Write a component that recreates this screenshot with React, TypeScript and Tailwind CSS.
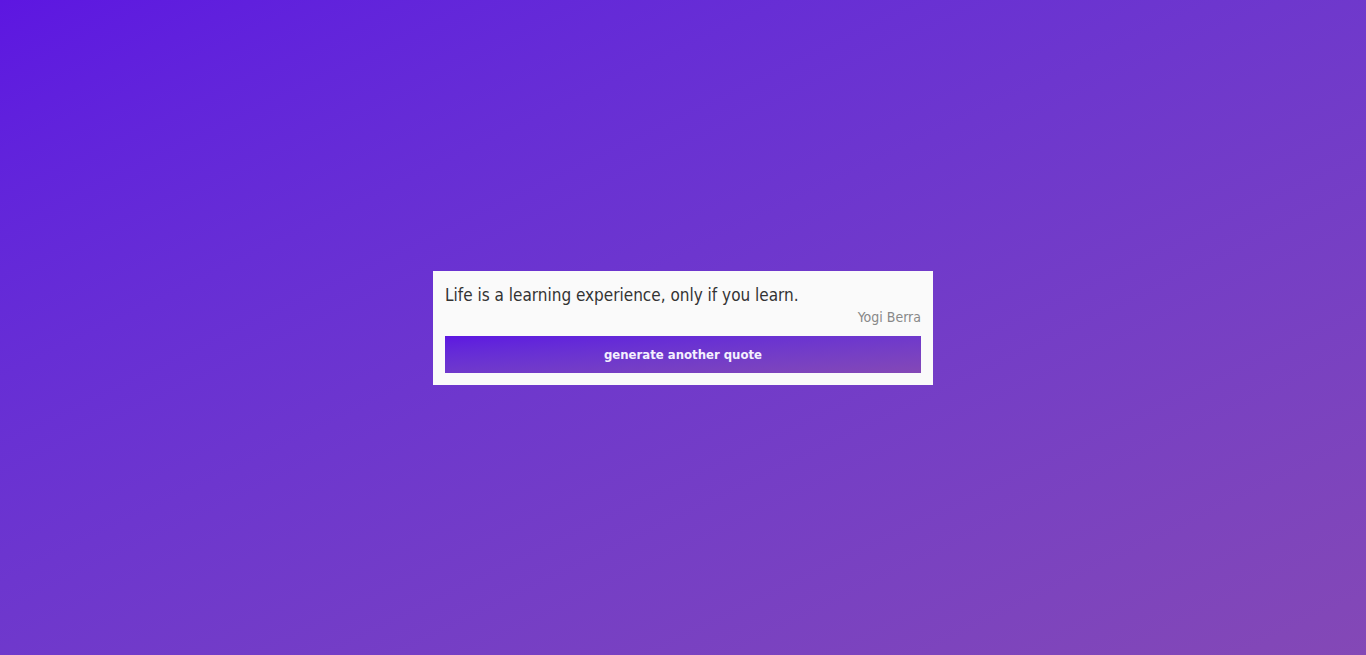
import React from 'react';

const App: React.FC = () => {
  return (
    <div className="min-h-screen w-full flex items-center justify-center bg-gradient-to-br from-[#5d16e1] to-[#8448b6] font-['DejaVu_Sans_Condensed',sans-serif]">
      <div className="w-[500px] bg-[#fafafa] p-3 flex flex-col mt-[1px]">
        <p className="text-[17px] leading-[24px] text-[#333]">
          Life is a learning experience, only if you learn.
        </p>
        <p className="text-right text-[14px] leading-[18px] text-[#888] mt-[1px]">Yogi Berra</p>
        <button className="mt-[10px] h-[37px] w-full bg-gradient-to-br from-[#5d16e1] to-[#8448b6] text-[#f4f0ff] text-[13px] font-bold">
          generate another quote
        </button>
      </div>
    </div>
  );
};

export default App;
